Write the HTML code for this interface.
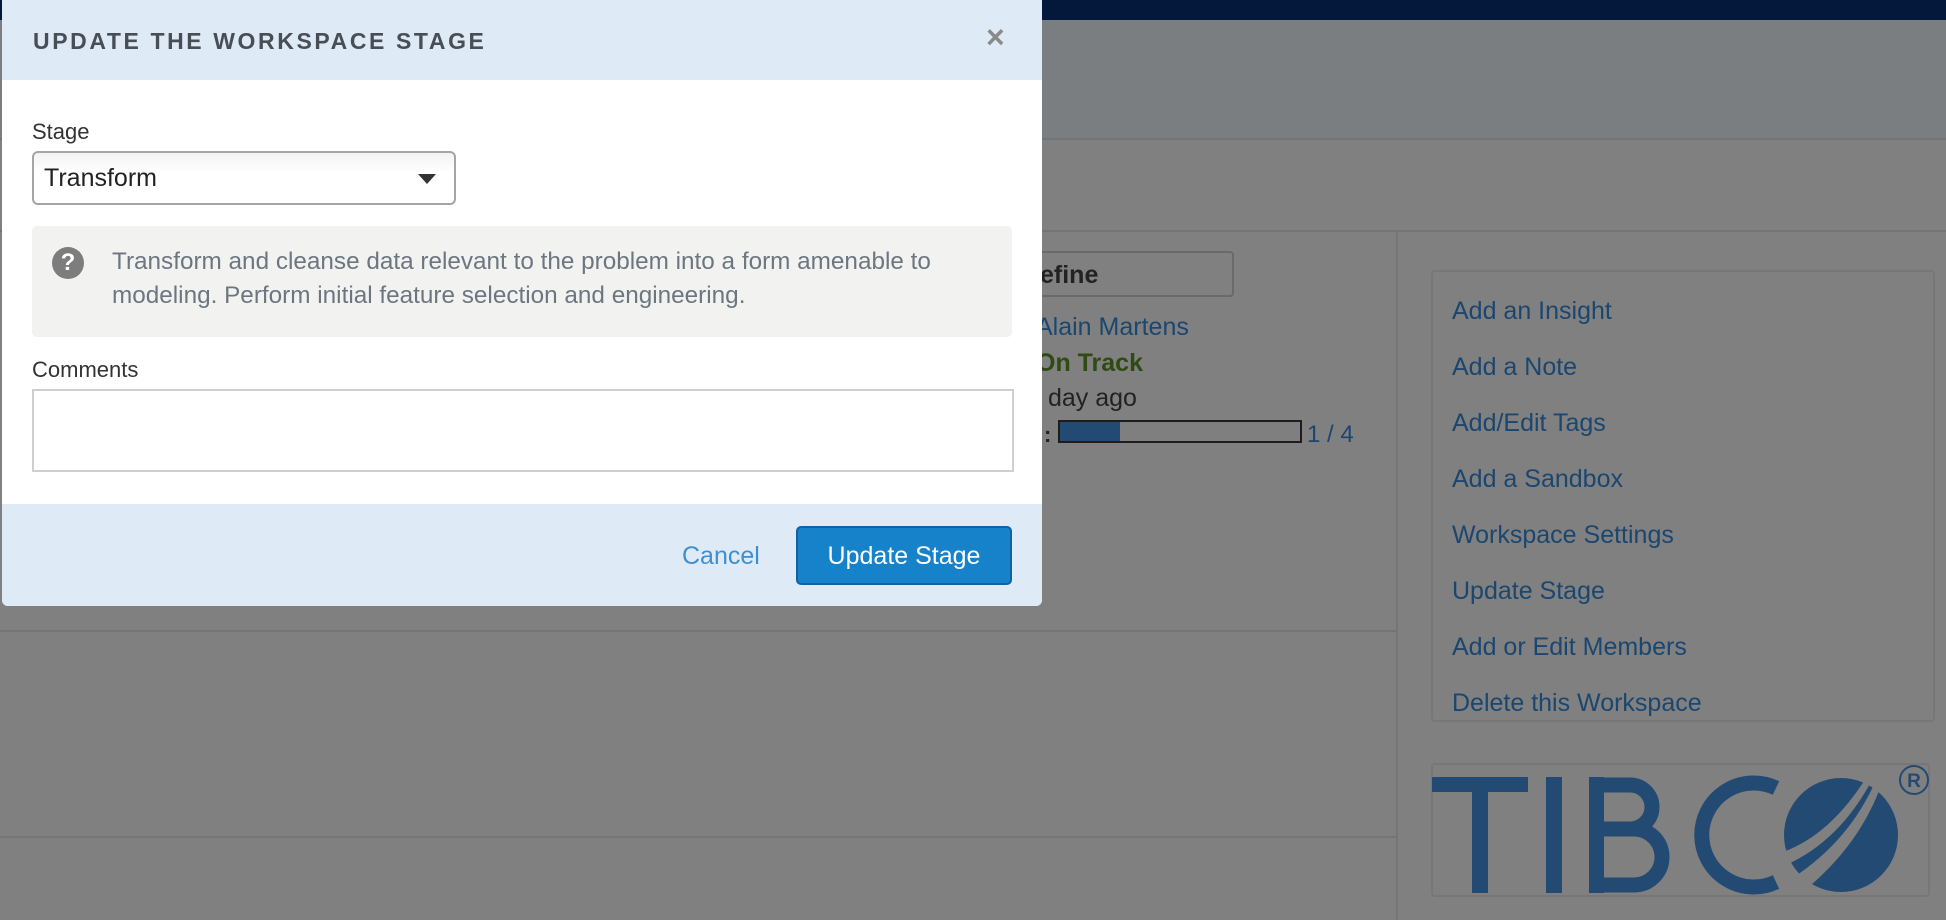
<!DOCTYPE html>
<html><head><meta charset="utf-8">
<style>
*{box-sizing:border-box;margin:0;padding:0}
body{width:1946px;height:920px;overflow:hidden;background:#808080;font-family:"Liberation Sans",sans-serif;position:relative}
.abs{position:absolute}
.link{position:absolute;left:1452px;color:#1a466f;font-size:25px;line-height:30px}
</style></head><body>
<div class="abs" style="left:0;top:0;width:1946px;height:20px;background:#03183b"></div>
<div class="abs" style="left:0;top:20px;width:1946px;height:118px;background:#7b7e80"></div>
<div class="abs" style="left:0;top:138px;width:1946px;height:2px;background:#747474"></div>
<div class="abs" style="left:0;top:230px;width:1946px;height:2px;background:#747474"></div>
<div class="abs" style="left:1396px;top:231px;width:2px;height:689px;background:#757575"></div>
<div class="abs" style="left:0;top:630px;width:1397px;height:2px;background:#757575"></div>
<div class="abs" style="left:0;top:836px;width:1397px;height:2px;background:#757575"></div>

<div class="abs" style="left:990px;top:251px;width:244px;height:46px;border:2px solid #6a6a6a;border-radius:4px"></div>
<div class="abs" style="left:1040px;top:261px;font-size:25px;font-weight:bold;color:#222">efine</div>
<div class="abs" style="left:1036px;top:313px;font-size:25px;color:#1a466f">Alain Martens</div>
<div class="abs" style="left:1036px;top:349px;font-size:25px;font-weight:bold;color:#2f4a12">On Track</div>
<div class="abs" style="left:1048px;top:384px;font-size:25px;color:#222">day ago</div>
<div class="abs" style="left:1044px;top:422px;font-size:22px;font-weight:bold;color:#222">:</div>
<div class="abs" style="left:1058px;top:420px;width:244px;height:23px;border:2px solid #1d1d1d;background:#7f7f7f"><div style="width:60px;height:100%;background:#234a73"></div></div>
<div class="abs" style="left:1307px;top:421px;font-size:24px;color:#1a466f">1 / 4</div>

<div class="abs" style="left:1431px;top:270px;width:504px;height:452px;border:2px solid #777;border-radius:4px"></div>
<div class="link" style="top:296px">Add an Insight</div>
<div class="link" style="top:352px">Add a Note</div>
<div class="link" style="top:408px">Add/Edit Tags</div>
<div class="link" style="top:464px">Add a Sandbox</div>
<div class="link" style="top:520px">Workspace Settings</div>
<div class="link" style="top:576px">Update Stage</div>
<div class="link" style="top:632px">Add or Edit Members</div>
<div class="link" style="top:688px">Delete this Workspace</div>

<div class="abs" style="left:1431px;top:763px;width:499px;height:134px;border:2px solid #777;border-radius:4px"></div>
<svg class="abs" style="left:1420px;top:750px" width="526" height="170" viewBox="0 0 526 170">
 <g fill="#234a73" stroke="none">
  <rect x="12" y="27" width="96" height="15"/>
  <rect x="52" y="27" width="16" height="116"/>
  <rect x="126" y="27" width="16" height="116"/>
  <rect x="169" y="27" width="15" height="116"/>
 </g>
 <g fill="none" stroke="#234a73" stroke-width="15">
  <path d="M176 35 H210 A22 22 0 0 1 210 79 H176"/>
  <path d="M176 79 H214 A28 28 0 0 1 214 135 H176"/>
  <path d="M356 38 A52 52 0 1 0 356 132"/>
 </g>
 <circle cx="421" cy="85" r="57" fill="#234a73"/>
 <path d="M363 102 Q410 85 446 28 L452 30 Q420 90 368 114 Z" fill="#808080"/>
 <path d="M374 127 Q430 90 456 30 L462 33 Q440 95 385 140 Z" fill="#808080"/>
 <circle cx="494" cy="30" r="14" fill="none" stroke="#234a73" stroke-width="2"/>
 <text x="494" y="37" text-anchor="middle" font-size="19" font-weight="bold" fill="#234a73" font-family="Liberation Sans,sans-serif">R</text>
</svg>

<div class="abs" style="left:2px;top:0;width:1040px;height:606px;background:#fff;border-radius:0 0 6px 6px;overflow:hidden">
 <div style="position:absolute;left:0;top:0;width:100%;height:80px;background:#dfeaf7"></div>
 <div style="position:absolute;left:31px;top:28px;font-size:23px;font-weight:bold;letter-spacing:2.6px;color:#484e55">UPDATE THE WORKSPACE STAGE</div>
 <div style="position:absolute;left:984px;top:19px;font-size:32px;font-weight:bold;color:#8a8a8a">×</div>

 <div style="position:absolute;left:30px;top:119px;font-size:22px;color:#333">Stage</div>
 <div style="position:absolute;left:30px;top:151px;width:424px;height:54px;border:2px solid #a5a5a5;border-radius:6px;background:linear-gradient(#f3f3f3,#fff 40%)"></div>
 <div style="position:absolute;left:42px;top:164px;font-size:25px;color:#222">Transform</div>
 <div style="position:absolute;left:416px;top:174px;width:0;height:0;border-left:9px solid transparent;border-right:9px solid transparent;border-top:10px solid #333"></div>

 <div style="position:absolute;left:30px;top:226px;width:980px;height:111px;background:#f2f2f1;border-radius:5px"></div>
 <div style="position:absolute;left:50px;top:247px;width:32px;height:32px;border-radius:50%;background:#7d7d7d;color:#fff;font-weight:bold;font-size:24px;text-align:center;line-height:32px">?</div>
 <div style="position:absolute;left:110px;top:245px;width:880px;font-size:24.3px;line-height:34px;color:#6d7680;white-space:nowrap">Transform and cleanse data relevant to the problem into a form amenable to<br>modeling. Perform initial feature selection and engineering.</div>

 <div style="position:absolute;left:30px;top:357px;font-size:22px;color:#333">Comments</div>
 <div style="position:absolute;left:30px;top:389px;width:982px;height:83px;border:2px solid #cfcfcf;background:#fff"></div>

 <div style="position:absolute;left:0;top:504px;width:100%;height:102px;background:#dfeaf7"></div>
 <div style="position:absolute;left:680px;top:542px;font-size:25px;color:#3d8fd4">Cancel</div>
 <div style="position:absolute;left:794px;top:526px;width:216px;height:59px;background:#1682ca;border:2px solid #0f62a3;border-radius:5px;color:#fff;font-size:25px;text-align:center;line-height:56px">Update Stage</div>
</div>
</body></html>
